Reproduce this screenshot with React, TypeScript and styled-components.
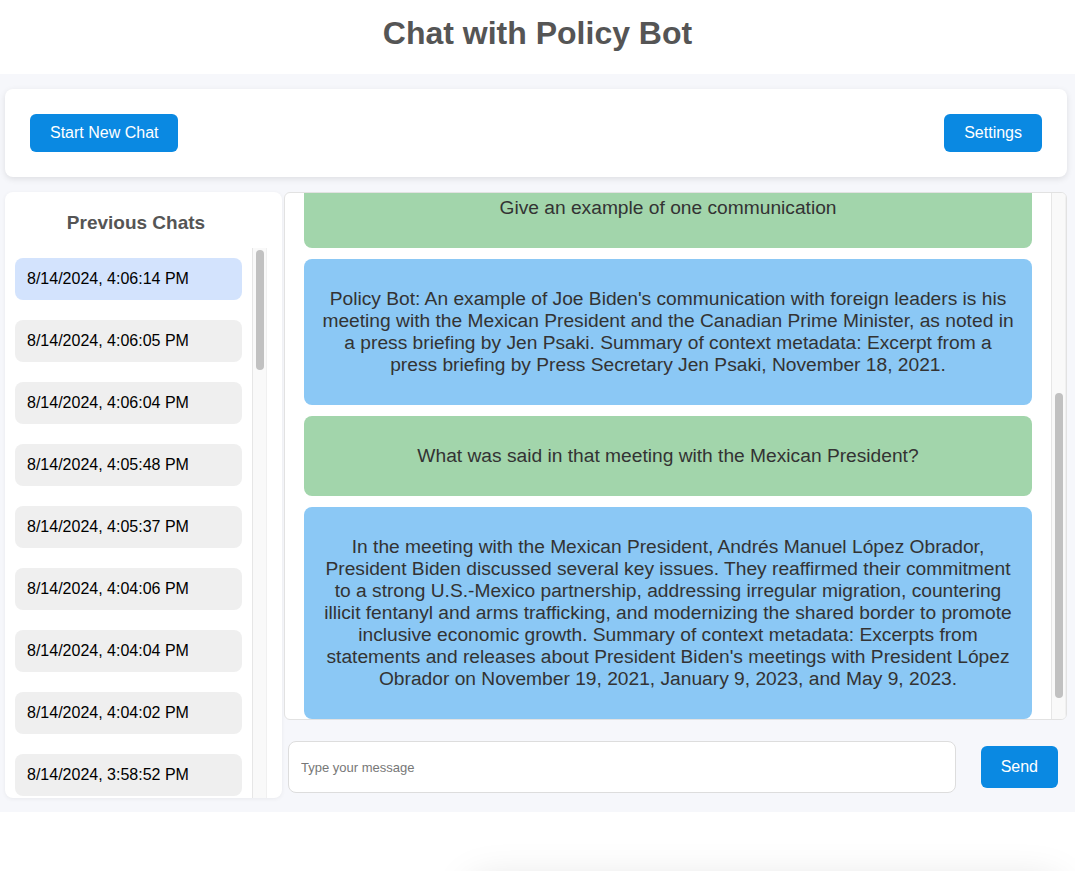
import React, { useLayoutEffect, useRef } from "react";
import styled, { createGlobalStyle } from "styled-components";

const GlobalStyle = createGlobalStyle`
  html, body {
    margin: 0;
    padding: 0;
    background: #ffffff;
    font-family: "Liberation Sans", Arial, Helvetica, sans-serif;
  }
  * {
    box-sizing: border-box;
  }
`;

type Message = { from: "user" | "bot"; text: string };

const messages: Message[] = [
  {
    from: "bot",
    text: "Policy Bot: Hello! I can answer questions about the policy statements and press briefings in my library. What would you like to know?",
  },
  {
    from: "user",
    text: "How does Joe Biden communicate with foreign leaders?",
  },
  {
    from: "bot",
    text: "Policy Bot: Joe Biden communicates with foreign leaders through bilateral meetings, phone calls, joint statements and summits, often followed by readouts from the White House. Summary of context metadata: Press briefings, 2021.",
  },
  { from: "user", text: "Give an example of one communication" },
  {
    from: "bot",
    text: "Policy Bot: An example of Joe Biden's communication with foreign leaders is his meeting with the Mexican President and the Canadian Prime Minister, as noted in a press briefing by Jen Psaki. Summary of context metadata: Excerpt from a press briefing by Press Secretary Jen Psaki, November 18, 2021.",
  },
  { from: "user", text: "What was said in that meeting with the Mexican President?" },
  {
    from: "bot",
    text: "In the meeting with the Mexican President, Andrés Manuel López Obrador, President Biden discussed several key issues. They reaffirmed their commitment to a strong U.S.-Mexico partnership, addressing irregular migration, countering illicit fentanyl and arms trafficking, and modernizing the shared border to promote inclusive economic growth. Summary of context metadata: Excerpts from statements and releases about President Biden's meetings with President López Obrador on November 19, 2021, January 9, 2023, and May 9, 2023.",
  },
];

const chats: string[] = [
  "8/14/2024, 4:06:14 PM",
  "8/14/2024, 4:06:05 PM",
  "8/14/2024, 4:06:04 PM",
  "8/14/2024, 4:05:48 PM",
  "8/14/2024, 4:05:37 PM",
  "8/14/2024, 4:04:06 PM",
  "8/14/2024, 4:04:04 PM",
  "8/14/2024, 4:04:02 PM",
  "8/14/2024, 3:58:52 PM",
  "8/14/2024, 3:58:40 PM",
  "8/14/2024, 3:57:11 PM",
  "8/14/2024, 3:55:29 PM",
  "8/14/2024, 3:52:03 PM",
  "8/14/2024, 3:51:47 PM",
  "8/14/2024, 3:49:30 PM",
  "8/14/2024, 3:45:18 PM",
  "8/14/2024, 3:44:56 PM",
  "8/14/2024, 3:40:02 PM",
  "8/14/2024, 3:38:41 PM",
  "8/14/2024, 3:35:09 PM",
];

function App() {
  const chatRef = useRef<HTMLDivElement>(null);

  useLayoutEffect(() => {
    // keep the newest message in view
    if (chatRef.current) {
      chatRef.current.scrollTop = chatRef.current.scrollHeight;
    }
  }, []);

  return (
    <>
      <GlobalStyle />
      <Header>
        <Title>Chat with Policy Bot</Title>
      </Header>
      <Main>
        <TopBar>
          <BlueButton>Start New Chat</BlueButton>
          <BlueButton>Settings</BlueButton>
        </TopBar>
        <Body>
          <Sidebar>
            <SidebarTitle>Previous Chats</SidebarTitle>
            <ListRow>
              <ChatList>
                {chats.map((c, i) => (
                  <ChatItem key={c + i} $active={i === 0}>
                    {c}
                  </ChatItem>
                ))}
              </ChatList>
              <ScrollTrack>
                <ScrollThumb $top={2} $size={120} />
              </ScrollTrack>
            </ListRow>
          </Sidebar>
          <ChatColumn>
            <ChatPanel>
              <ChatScroll ref={chatRef}>
                {messages.map((m, i) => (
                  <Bubble key={i} $from={m.from}>
                    {m.text}
                  </Bubble>
                ))}
              </ChatScroll>
              <ScrollTrack>
                <ScrollThumb $top={200} $size={305} />
              </ScrollTrack>
            </ChatPanel>
            <InputRow>
              <MessageInput placeholder="Type your message" />
              <SendButton>Send</SendButton>
            </InputRow>
          </ChatColumn>
        </Body>
      </Main>
      <FloatingShadow />
    </>
  );
}

const Header = styled.header`
  padding: 15px 0 22px;
  background: #ffffff;
`;

const Title = styled.h1`
  margin: 0;
  text-align: center;
  font-size: 32px;
  line-height: 37px;
  font-weight: 700;
  color: #555555;
`;

const Main = styled.main`
  background: #f6f7fb;
  padding: 15px 8px 14px 5px;
  display: flex;
  flex-direction: column;
  gap: 15px;
`;

const TopBar = styled.div`
  display: flex;
  justify-content: space-between;
  align-items: center;
  padding: 25px;
  background: #ffffff;
  border-radius: 8px;
  box-shadow: 0 2px 6px rgba(0, 0, 0, 0.1);
`;

const BlueButton = styled.button`
  height: 38px;
  padding: 0 20px;
  border: none;
  border-radius: 6px;
  background: #0a89e2;
  color: #ffffff;
  font-family: inherit;
  font-size: 16px;
  cursor: pointer;
`;

const Body = styled.div`
  display: flex;
  gap: 2px;
  height: 606px;
`;

const Sidebar = styled.aside`
  width: 277px;
  flex-shrink: 0;
  display: flex;
  flex-direction: column;
  padding: 20px 15px 0 10px;
  background: #ffffff;
  border-radius: 8px;
  box-shadow: 0 1px 4px rgba(0, 0, 0, 0.06);
  overflow: hidden;
`;

const SidebarTitle = styled.h2`
  margin: 0 0 14px;
  padding-right: 10px;
  text-align: center;
  font-size: 19px;
  line-height: 22px;
  font-weight: 700;
  color: #555555;
`;

const ListRow = styled.div`
  flex: 1;
  display: flex;
  min-height: 0;
`;

const ChatList = styled.div`
  flex: 1;
  display: flex;
  flex-direction: column;
  gap: 20px;
  padding: 10px 10px 0 0;
  overflow: hidden;
`;

const ChatItem = styled.div<{ $active: boolean }>`
  flex-shrink: 0;
  height: 42px;
  display: flex;
  align-items: center;
  padding: 0 12px;
  border-radius: 8px;
  background: ${(p) => (p.$active ? "#d3e3fd" : "#efefef")};
  color: #000000;
  font-size: 16px;
`;

const ScrollTrack = styled.div`
  width: 15px;
  flex-shrink: 0;
  background: #f9f9f9;
  border-left: 1px solid #e6e6e6;
  border-right: 1px solid #f0f0f0;
`;

const ScrollThumb = styled.div<{ $top: number; $size: number }>`
  width: 8px;
  margin-left: 3px;
  margin-top: ${(p) => p.$top}px;
  height: ${(p) => p.$size}px;
  border-radius: 4px;
  background: #c1c1c1;
`;

const ChatColumn = styled.section`
  flex: 1;
  display: flex;
  flex-direction: column;
  min-width: 0;
`;

const ChatPanel = styled.div`
  height: 528px;
  display: flex;
  background: #ffffff;
  border: 1px solid #e2e2e2;
  border-radius: 6px;
  overflow: hidden;
`;

const ChatScroll = styled.div`
  flex: 1;
  display: flex;
  flex-direction: column;
  gap: 11px;
  padding: 10px 19px 0 19px;
  overflow: hidden;
`;

const Bubble = styled.div<{ $from: "user" | "bot" }>`
  flex-shrink: 0;
  padding: 29px 15px;
  border-radius: 8px;
  background: ${(p) => (p.$from === "user" ? "#a2d5ab" : "#8bc8f5")};
  color: #333333;
  font-size: 19.2px;
  line-height: 22px;
  text-align: center;
`;

const InputRow = styled.div`
  display: flex;
  align-items: center;
  gap: 25px;
  margin-top: 21px;
  padding: 0 9px 5px 4px;
`;

const MessageInput = styled.input`
  flex: 1;
  height: 52px;
  padding: 0 12px;
  border: 1px solid #dddddd;
  border-radius: 8px;
  background: #ffffff;
  font-family: inherit;
  font-size: 13px;
  outline: none;
  &::placeholder {
    color: #777777;
  }
`;

const SendButton = styled(BlueButton)`
  height: 42px;
  padding: 0 20px;
`;

const FloatingShadow = styled.div`
  position: fixed;
  left: 470px;
  bottom: -110px;
  width: 590px;
  height: 100px;
  border-radius: 12px;
  background: #ffffff;
  box-shadow: 0 0 40px rgba(0, 0, 0, 0.13);
`;

export default App;
